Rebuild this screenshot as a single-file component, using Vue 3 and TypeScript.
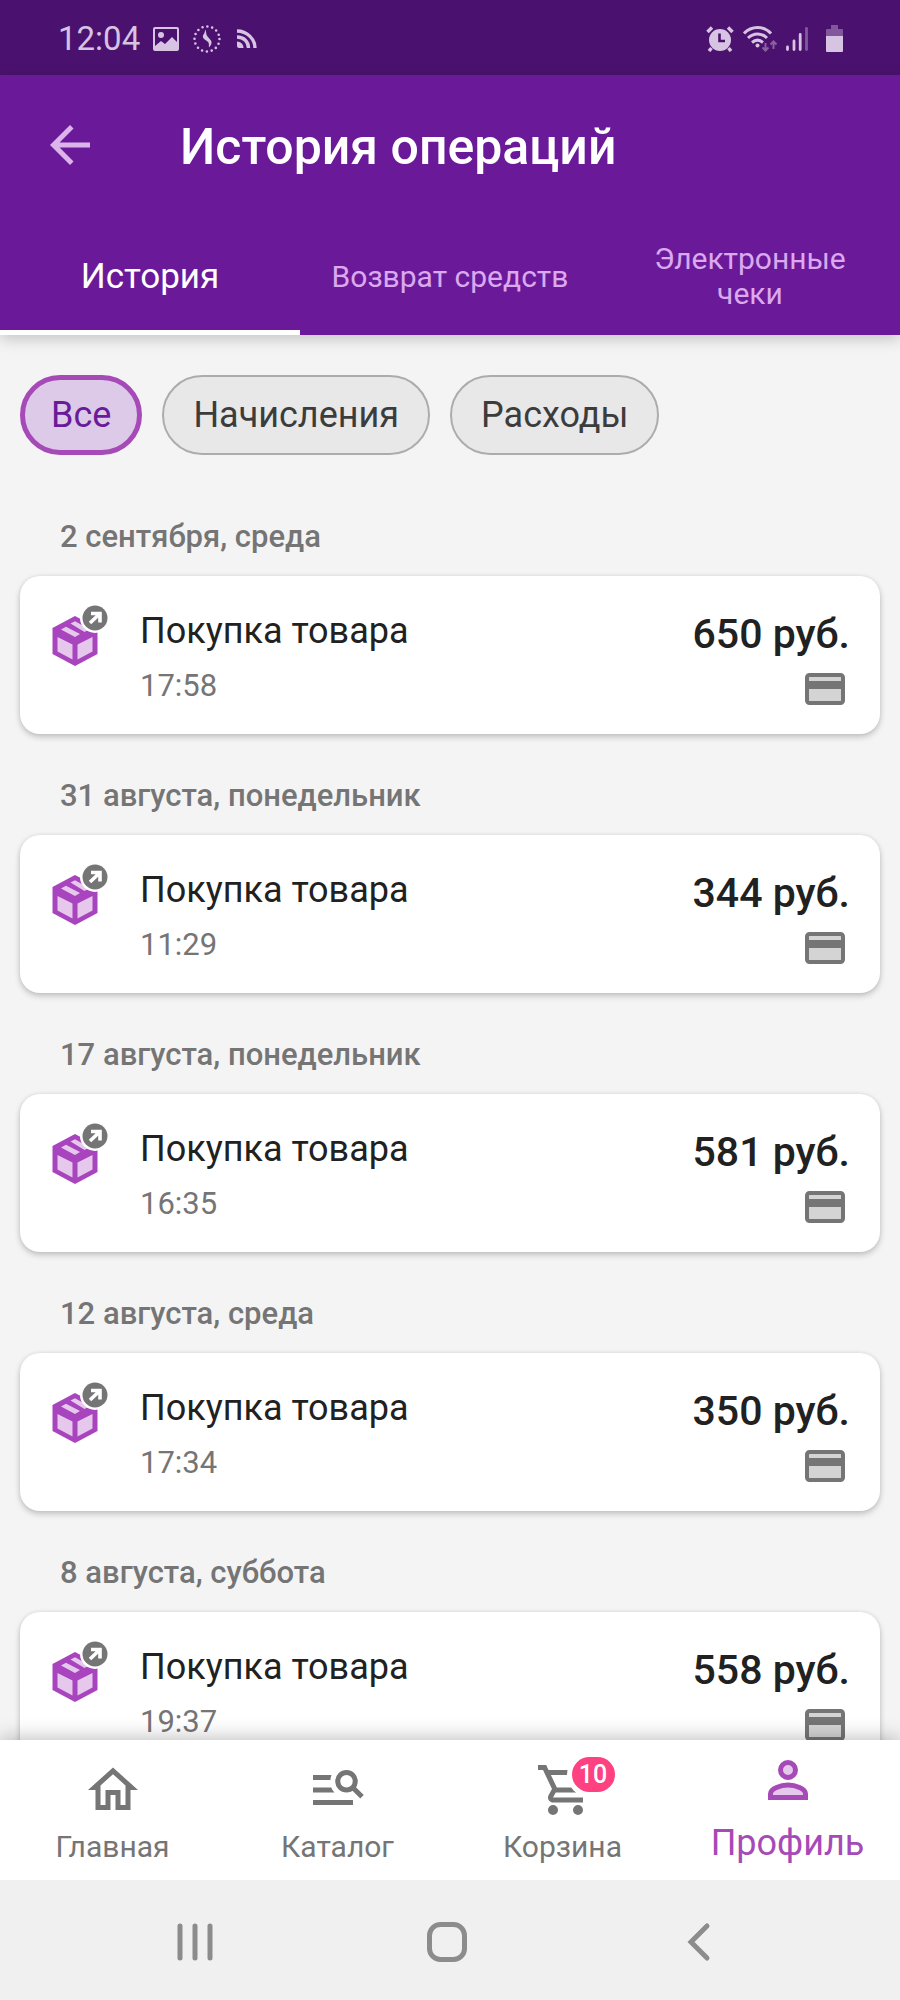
<script setup lang="ts">
import { ref } from 'vue'

interface Operation {
  date: string
  title: string
  time: string
  amount: string
}

const tabs: string[] = ['История', 'Возврат средств', 'Электронные чеки']
const filters: string[] = ['Все', 'Начисления', 'Расходы']
const activeTab = ref(0)
const activeFilter = ref(0)

const operations: Operation[] = [
  { date: '2 сентября, среда', title: 'Покупка товара', time: '17:58', amount: '650 руб.' },
  { date: '31 августа, понедельник', title: 'Покупка товара', time: '11:29', amount: '344 руб.' },
  { date: '17 августа, понедельник', title: 'Покупка товара', time: '16:35', amount: '581 руб.' },
  { date: '12 августа, среда', title: 'Покупка товара', time: '17:34', amount: '350 руб.' },
  { date: '8 августа, суббота', title: 'Покупка товара', time: '19:37', amount: '558 руб.' },
]
</script>

<template>
  <div class="screen">
    <div class="status">
      <span class="clock">12:04</span>
      <svg class="s-picture" viewBox="0 0 26 24" aria-hidden="true">
        <rect x="1" y="1" width="24" height="22" rx="1" fill="none" stroke="currentColor" stroke-width="2" />
        <circle cx="8" cy="8" r="3" fill="currentColor" />
        <path d="M2 19l6-5 4 3 7-7 6 6v7H2z" fill="currentColor" />
      </svg>
      <svg class="s-dots" viewBox="0 0 28 28" aria-hidden="true">
        <circle cx="14" cy="14" r="12.5" fill="none" stroke="currentColor" stroke-width="2.6" stroke-linecap="round" stroke-dasharray="0 4.909" />
        <path d="M12.5 4.5c1 3 .2 5 2.500 7.500l3 3.500c1.500 3-.5 5-2 7-.3-3 .4-4.500-1.500-6l-3.500-2.500c-2-2.500-1-4 .2-5.500z" fill="currentColor" />
      </svg>
      <svg class="s-rss" viewBox="0 0 20 20" aria-hidden="true">
        <g fill="none" stroke="currentColor" stroke-width="3.400">
          <path d="M0 2c10 0 18 8 18 17" />
          <path d="M0 8c7 0 11.500 5 11.500 11" />
        </g>
        <path d="M0 12.500c4 0 6.500 3 6.500 6.500H2a2 2 0 0 1-2-2z" fill="currentColor" />
      </svg>
      <span class="spacer"></span>
      <svg class="s-alarm" viewBox="0 0 28 26" aria-hidden="true">
        <circle cx="14" cy="14" r="11" fill="currentColor" />
        <path d="M1.500 6L6 1.500M26.500 6L22 1.500M5.500 22L3 25M22.500 22l2.500 3" stroke="currentColor" stroke-width="3.500" />
        <path d="M13.500 7.500v7.500H19" class="alarm-hands" fill="none" stroke-width="2.600" />
      </svg>
      <svg class="s-wifi" viewBox="0 0 34 26" aria-hidden="true">
        <g fill="none" stroke="currentColor" stroke-width="3">
          <path d="M1 7.500C8.500-.5 20.500-.5 28 7.500" />
          <path d="M5 12c5.500-5.500 13.500-5.500 19 0" />
          <path d="M9 16.500c3.500-3 7.500-3 11 0" />
        </g>
        <circle cx="14.500" cy="19.500" r="2" fill="currentColor" />
        <path d="M22.500 17v7M19.500 21.500l3 3 3-3M30.500 23v-7M27.500 18.500l3-3 3 3" fill="none" stroke="currentColor" stroke-width="2" opacity=".45" />
      </svg>
      <svg class="s-signal" viewBox="0 0 22 24" aria-hidden="true">
        <g stroke="currentColor" stroke-width="2.800" stroke-linecap="round">
          <path d="M1.500 20v2.500M8 14v8.500M14.200 7.500v15" />
          <path d="M20.500 1.500v21" opacity=".4" />
        </g>
      </svg>
      <svg class="s-battery" viewBox="0 0 18 28" aria-hidden="true">
        <path d="M5 0h7v4h4q1 0 1 1v7H0V5q0-1 1-1h4z" fill="currentColor" opacity=".4" />
        <path d="M0 11h17v15q0 1-1 1H1q-1 0-1-1z" fill="currentColor" />
      </svg>
    </div>

    <header class="header">
      <div class="appbar">
        <button class="back" type="button" aria-label="Назад">
          <svg viewBox="0 0 24 24"><path fill="currentColor" d="M20 11H7.830l5.590-5.590L12 4l-8 8 8 8 1.410-1.410L7.830 13H20z" /></svg>
        </button>
        <h1>История операций</h1>
      </div>
      <nav class="tabs">
        <button
          v-for="(tab, i) in tabs"
          :key="tab"
          type="button"
          :class="['tab', { active: i === activeTab }]"
          @click="activeTab = i"
        >{{ tab }}</button>
      </nav>
    </header>

    <main class="content">
      <div class="filters">
        <button
          v-for="(filter, i) in filters"
          :key="filter"
          type="button"
          :class="['chip', { active: i === activeFilter }]"
          @click="activeFilter = i"
        >{{ filter }}</button>
      </div>

      <section v-for="op in operations" :key="op.date" class="group">
        <h2>{{ op.date }}</h2>
        <article class="card">
          <svg class="box" viewBox="0 0 60 60" aria-hidden="true">
            <path d="M30 6L52.500 18v26L30 56 7.500 44V18z" class="box-edge" />
            <path d="M12.500 27l15 7.500v15l-15-8zM32.500 34.500l15-7.500v14.500l-15 8zM16 19.500l5-2.700 14 7.200-5 3zM25.500 13.500l4.500-2.300 14.500 8-5 2.800z" class="box-face" />
            <circle cx="50" cy="8" r="15" fill="#fff" />
            <circle cx="50" cy="8" r="12.500" fill="#757575" />
            <path d="M46 3.500H55v9M54 4.500L45 13" fill="none" stroke="#fff" stroke-width="3.600" />
          </svg>
          <div class="info">
            <h3>{{ op.title }}</h3>
            <time>{{ op.time }}</time>
          </div>
          <div class="sum">
            <strong>{{ op.amount }}</strong>
            <svg viewBox="0 0 40 32" aria-hidden="true">
              <rect x="2" y="2" width="36" height="28" rx="2.500" fill="#d4d4d4" stroke="#757575" stroke-width="4" />
              <path d="M2 8h36v8H2z" fill="#757575" />
            </svg>
          </div>
        </article>
      </section>
    </main>

    <nav class="bottom">
      <a href="#home">
        <svg viewBox="0 0 24 24" aria-hidden="true"><path fill="currentColor" d="M12 5.690l5 4.500V18h-2v-6H9v6H7v-7.810l5-4.500M12 3L2 12h3v8h6v-6h2v6h6v-8h3L12 3z" /></svg>
        <span>Главная</span>
      </a>
      <a href="#catalog">
        <svg viewBox="0 0 24 24" aria-hidden="true">
          <path fill="currentColor" d="M2 6h7.400q-.4 1-.4 2H2zM2 11h7.300q.4 1.200 1.300 2H2zM2 16h16v2H2z" />
          <circle cx="15.400" cy="8.500" r="3.500" fill="none" stroke="currentColor" stroke-width="2" />
          <path d="M17.800 10.900L21.600 14.700" stroke="currentColor" stroke-width="2" />
        </svg>
        <span>Каталог</span>
      </a>
      <a href="#cart">
        <div class="cart">
          <svg viewBox="-1 0 24 24" aria-hidden="true">
            <path fill="currentColor" d="M15.550 13c.75 0 1.410-.41 1.750-1.030l3.580-6.490A.996.996 0 0 0 20.010 4H5.210l-.94-2H1v2h2l3.600 7.590-1.350 2.440C4.520 15.370 5.480 17 7 17h12v-2H7l1.100-2h7.450zM6.160 6h12.150l-2.760 5H8.530L6.160 6zM7 18a2 2 0 1 0 0 4 2 2 0 0 0 0-4zm10 0a2 2 0 1 0 0 4 2 2 0 0 0 0-4z" />
          </svg>
          <b class="badge">10</b>
        </div>
        <span>Корзина</span>
      </a>
      <a href="#profile" class="active" aria-current="page">
        <svg viewBox="0 0 24 24" aria-hidden="true">
          <circle cx="12" cy="8" r="3" fill="#e6c8ec" stroke="currentColor" stroke-width="2" />
          <path d="M5 19v-1.500c0-2 4-3.500 7-3.500s7 1.500 7 3.500V19z" fill="#e6c8ec" stroke="currentColor" stroke-width="2" />
        </svg>
        <span>Профиль</span>
      </a>
    </nav>

    <div class="system">
      <button type="button" aria-label="Недавние">
        <svg viewBox="0 0 40 40"><path d="M5 4v32M20 4v32M35 4v32" /></svg>
      </button>
      <button type="button" aria-label="Домой">
        <svg viewBox="0 0 40 40"><rect x="2.500" y="2.500" width="35" height="35" rx="11" /></svg>
      </button>
      <button type="button" aria-label="Назад">
        <svg viewBox="0 0 40 40"><path d="M28 4L12 20l16 16" /></svg>
      </button>
    </div>
  </div>
</template>

<style>
body {
  margin: 0;
  background: #f4f4f4;
}
</style>

<style scoped>
.screen {
  display: flex;
  flex-direction: column;
  height: 100vh;
  overflow: hidden;
  background: #f4f4f4;
  font-family: Roboto, "Noto Sans", sans-serif;
  color: #212121;
}

h1,
h2,
h3 {
  margin: 0;
}

button {
  margin: 0;
  padding: 0;
  border: 0;
  background: none;
  font: inherit;
  color: inherit;
  cursor: pointer;
}

svg {
  display: block;
  flex: none;
}

.status {
  flex: none;
  display: flex;
  align-items: center;
  box-sizing: border-box;
  height: 75px;
  padding: 2px 56px 0 58px;
  background: #4a126e;
  color: #d7c3e2;
}

.clock {
  font-size: 33px;
  line-height: 40px;
  margin-right: 13px;
}

.spacer {
  flex: 1;
}

.s-picture {
  width: 26px;
  height: 24px;
  margin-right: 14px;
}

.s-dots {
  width: 28px;
  height: 28px;
  margin-right: 16px;
}

.s-rss {
  width: 20px;
  height: 20px;
}

.s-alarm {
  width: 28px;
  height: 26px;
  margin-right: 9px;
}

.alarm-hands {
  stroke: #4a126e;
}

.s-wifi {
  width: 34px;
  height: 26px;
  margin-right: 9px;
}

.s-signal {
  width: 22px;
  height: 24px;
  margin-right: 18px;
}

.s-battery {
  width: 18px;
  height: 28px;
}

.header {
  position: relative;
  z-index: 1;
  flex: none;
  background: #6a1a98;
  box-shadow: 0 4px 14px rgba(0, 0, 0, 0.2);
}

.appbar {
  display: flex;
  align-items: center;
  height: 140px;
  padding: 0 40px;
  gap: 80px;
}

.back {
  color: #dcb4ec;
}

.back svg {
  width: 60px;
  height: 60px;
}

h1 {
  padding-top: 4px;
  font-size: 50px;
  line-height: 60px;
  font-weight: 500;
  color: #fff;
}

.tabs {
  display: grid;
  grid-template-columns: repeat(3, 1fr);
  height: 120px;
}

.tab {
  padding: 7px 30px 0;
  border-bottom: 5px solid transparent;
  font-size: 30px;
  line-height: 35px;
  color: #dba9ef;
}

.tab.active {
  border-bottom-color: #fff;
  font-size: 35px;
  color: #fff;
}

.content {
  flex: 1;
  min-height: 0;
  overflow: hidden;
  padding: 40px 20px 0;
}

.filters {
  display: flex;
  gap: 20px;
  margin-bottom: 20px;
}

.chip {
  height: 80px;
  padding: 0 29px;
  border: 2px solid #acacac;
  border-radius: 40px;
  background: #e8e8e8;
  font-size: 36px;
  line-height: 41px;
  color: #3c3c3c;
}

.chip.active {
  padding: 0 26px;
  border: 5px solid #a64ab8;
  background: #dccae8;
  color: #6a1b9a;
}

.group {
  padding-top: 44px;
}

h2 {
  padding-left: 40px;
  margin-bottom: 22px;
  font-size: 31px;
  line-height: 35px;
  font-weight: 500;
  color: #757575;
}

.card {
  display: flex;
  align-items: flex-start;
  padding: 34px 30px 29px 25px;
  border-radius: 20px;
  background: #fff;
  box-shadow: 0 3px 6px rgba(0, 0, 0, 0.2), 0 0 4px rgba(0, 0, 0, 0.08);
}

.box {
  width: 60px;
  height: 60px;
  margin-right: 35px;
  overflow: visible;
}

.box-edge {
  fill: #a844bd;
}

.box-face {
  fill: #e6c8ec;
}

.info {
  flex: 1;
}

h3 {
  font-size: 36px;
  line-height: 42px;
  font-weight: 400;
}

time {
  display: block;
  margin-top: 16px;
  font-size: 31px;
  line-height: 35px;
  color: #757575;
}

.sum {
  display: flex;
  flex-direction: column;
  align-items: flex-end;
  gap: 14px;
}

.sum strong {
  font-size: 41px;
  line-height: 49px;
  font-weight: 500;
}

.sum svg {
  width: 40px;
  height: 32px;
  margin-right: 5px;
}

.bottom {
  position: relative;
  z-index: 1;
  flex: none;
  display: grid;
  grid-template-columns: repeat(4, 1fr);
  height: 140px;
  background: #fff;
  box-shadow: 0 0 20px rgba(0, 0, 0, 0.3);
}

.bottom a {
  display: flex;
  flex-direction: column;
  align-items: center;
  box-sizing: border-box;
  padding-top: 20px;
  gap: 9px;
  font-size: 30px;
  line-height: 35px;
  color: #757575;
  text-decoration: none;
}

.bottom a.active {
  padding-top: 10px;
  gap: 12px;
  font-size: 36px;
  line-height: 42px;
  color: #a64ab8;
}

.bottom svg {
  width: 60px;
  height: 60px;
}

.cart {
  position: relative;
}

.badge {
  position: absolute;
  left: 39px;
  top: -3px;
  width: 43px;
  border-radius: 18px;
  background: #ff4081;
  box-shadow: 0 0 0 5px #fff;
  font-size: 25px;
  line-height: 35px;
  font-weight: 500;
  text-align: center;
  color: #fff;
}

.system {
  position: relative;
  z-index: 2;
  flex: none;
  display: grid;
  grid-template-columns: repeat(3, 1fr);
  height: 120px;
  padding: 0 75px 0 69px;
  background: #f0f0f0;
}

.system button {
  display: flex;
  align-items: center;
  justify-content: center;
  padding-top: 4px;
}

.system svg {
  width: 40px;
  height: 40px;
  fill: none;
  stroke: #8c8c8c;
  stroke-width: 5;
  stroke-linecap: round;
}
</style>
